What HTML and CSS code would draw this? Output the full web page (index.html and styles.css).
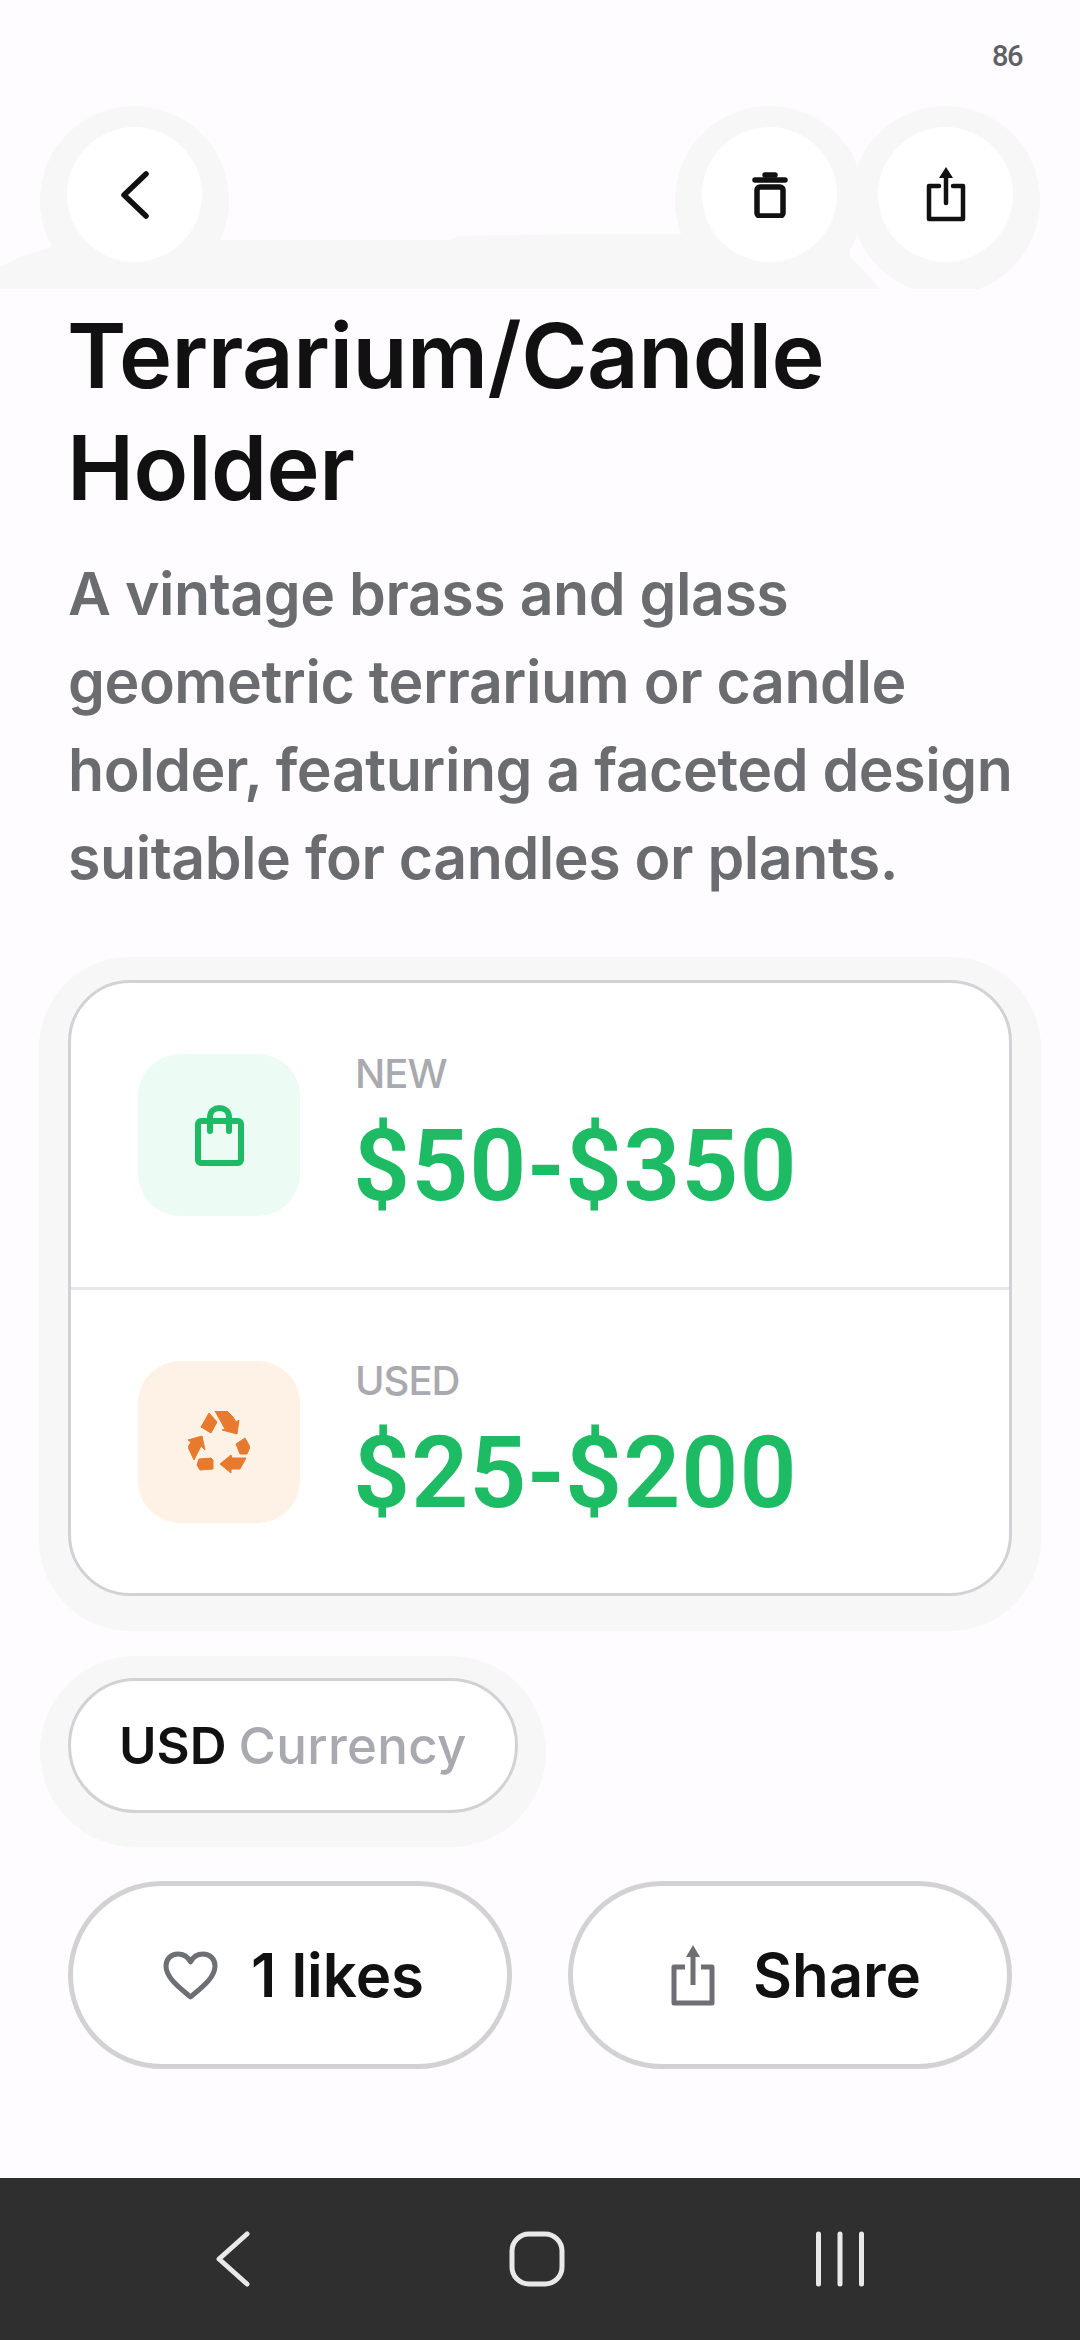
FILE: index.html
```html
<!DOCTYPE html>
<html lang="en">
<head>
    <meta charset="UTF-8">
    <meta name="viewport" content="width=device-width, initial-scale=1.0">
    <title>Terrarium/Candle Holder</title>
    <link rel="stylesheet" href="styles.css">
</head>
<body>

<div class="screen">
    <div class="status-bar">
        <span class="battery">86</span>
    </div>

    <svg class="top-band" viewBox="0 0 881 56" width="881" height="56" aria-hidden="true">
        <path d="M0 34L20 24L48 15L65 7L451 7L458 3L585 1L850 1L850 24L881 56L0 56Z"/>
    </svg>

    <header class="top-bar">
        <button class="round-btn" type="button">
            <svg viewBox="0 0 30 50" width="30" height="50"><path d="M26 4L4 25L26 46" class="line"/></svg>
        </button>
        <div class="top-actions">
            <button class="round-btn" type="button">
                <svg viewBox="0 0 36 46" width="36" height="46">
                    <path d="M3 8H33" class="line"/>
                    <path d="M13 3H23" class="line"/>
                    <rect x="5" y="15" width="26" height="29" rx="3" class="line"/>
                </svg>
            </button>
            <button class="round-btn" type="button">
                <svg viewBox="0 0 40 55" width="40" height="55">
                    <path d="M13 19H3V52H37V19H27" class="line thin"/>
                    <path d="M20 36V8" class="line thin"/>
                    <path d="M13 11L20 0L27 11Z" class="solid"/>
                </svg>
            </button>
        </div>
    </header>

    <main class="content">
        <h1 class="title">Terrarium/Candle Holder</h1>
        <p class="desc">A vintage brass and glass geometric terrarium or candle holder, featuring a faceted design suitable for candles or plants.</p>

        <section class="price-card">
            <div class="price-row">
                <div class="price-icon green-bg">
                    <svg viewBox="0 0 49 61" width="49" height="61" class="bag">
                        <rect x="3" y="16" width="43" height="42" rx="3"/>
                        <path d="M15 26V12C15 0 34 0 34 12V26"/>
                    </svg>
                </div>
                <div class="price-text">
                    <span class="price-label">NEW</span>
                    <span class="price-value">$50-$350</span>
                </div>
            </div>
            <div class="price-row">
                <div class="price-icon orange-bg">
                    <svg viewBox="0 0 62 62" width="62" height="62" class="recycle">
                        <path d="M21 2L29 11L23 22L13 16Z"/>
                        <path d="M27 0H39L45 6L48 11L51 9L49 23L34 19L37 18L32 9Z"/>
                        <path d="M57 27L62 36L59 43L52 43L48 33Z"/>
                        <path d="M58 47L52 58H43V62L32 53L43 44L44 47Z"/>
                        <path d="M11 48L23 47L25 49V58L12 59L9 54Z"/>
                        <path d="M0 29L14 25L17 39L13 35L6 49L0 36L3 31Z"/>
                    </svg>
                </div>
                <div class="price-text">
                    <span class="price-label">USED</span>
                    <span class="price-value">$25-$200</span>
                </div>
            </div>
        </section>

        <div class="currency-wrap">
            <div class="currency"><strong>USD</strong> <span>Currency</span></div>
        </div>

        <div class="actions">
            <button class="action-btn likes-btn" type="button">
                <svg viewBox="0 0 55 49" width="55" height="49">
                    <path d="M27.5 46C20 39 3 28 3 15C3 8 8 3 15 3C20 3 25 6 27.5 11C30 6 35 3 40 3C47 3 52 8 52 15C52 28 35 39 27.5 46Z" class="grey-line"/>
                </svg>
                <span>1 likes</span>
            </button>
            <button class="action-btn share-btn" type="button">
                <svg viewBox="0 0 44 61" width="44" height="61">
                    <path d="M14 22H3V58H41V22H30" class="grey-line"/>
                    <path d="M22 40V8" class="grey-line"/>
                    <path d="M15 12L22 0L29 12Z" class="grey-solid"/>
                </svg>
                <span>Share</span>
            </button>
        </div>
    </main>

    <nav class="nav-bar">
        <svg viewBox="0 0 56 56" width="56" height="56"><path d="M41 3L13 28L41 53" class="nav-line"/></svg>
        <svg viewBox="0 0 56 56" width="56" height="56"><rect x="3" y="3" width="50" height="50" rx="17" class="nav-line"/></svg>
        <svg viewBox="0 0 56 56" width="56" height="56"><path d="M6.5 3V53M28 3V53M49.5 3V53" class="nav-line"/></svg>
    </nav>
</div>

</body>
</html>
```

FILE: styles.css
```css
* {
    box-sizing: border-box;
}
body {
    margin: 0;
    font-family: 'Inter', 'Roboto', sans-serif;
    background-color: #fefcfe;
}
.screen {
    position: relative;
    width: 1080px;
    height: 2340px;
    display: flex;
    flex-direction: column;
    overflow: hidden;
}
.status-bar {
    height: 106px;
    padding: 41px 58px 0 0;
    display: flex;
    justify-content: flex-end;
}
.battery {
    font-family: 'Roboto', sans-serif;
    font-size: 29px;
    font-weight: 500;
    line-height: 30px;
    letter-spacing: -1.5px;
    color: #5f6064;
}
.top-band {
    position: absolute;
    left: 0;
    top: 233px;
    fill: #f7f7f7;
}
.top-bar {
    position: relative;
    height: 183px;
    padding: 21px 67px 0 67px;
    display: flex;
    justify-content: space-between;
    overflow: hidden;
}
.top-actions {
    display: flex;
    gap: 41px;
}
.round-btn {
    width: 135px;
    height: 135px;
    padding: 0;
    border: none;
    border-radius: 50%;
    background-color: white;
    box-shadow: 0 6px 0 27px #f7f7f7;
    display: flex;
    align-items: center;
    justify-content: center;
}
.line {
    fill: none;
    stroke: #111;
    stroke-width: 5.5;
    stroke-linecap: round;
    stroke-linejoin: round;
}
.thin {
    stroke-width: 4.5;
}
.solid {
    fill: #111;
}
.content {
    flex: 1;
    padding: 11px 68px 0 68px;
}
.title {
    margin: 0 0 0 -1px;
    font-size: 90px;
    line-height: 112px;
    font-weight: 600;
    letter-spacing: -0.5px;
    color: #111;
}
.desc {
    margin: 26px -14px 0 0;
    font-size: 59px;
    line-height: 88px;
    font-weight: 580;
    letter-spacing: -0.45px;
    color: #6b6c70;
}
.price-card {
    margin-top: 78px;
    width: 944px;
    background-color: white;
    border: 3px solid #d2d1d5;
    border-radius: 62px;
    box-shadow: 0 6px 0 29px #f7f7f7;
}
.price-row {
    height: 304px;
    padding: 0 67px;
    display: flex;
    align-items: center;
    gap: 55px;
}
.price-row + .price-row {
    height: 306px;
    border-top: 3px solid #e8e8ec;
}
.price-icon {
    width: 162px;
    height: 162px;
    border-radius: 42px;
    display: flex;
    align-items: center;
    justify-content: center;
    flex-shrink: 0;
}
.green-bg {
    background-color: #edfbf5;
}
.orange-bg {
    background-color: #fef2e6;
}
.bag {
    fill: none;
    stroke: #1dbb63;
    stroke-width: 6;
    stroke-linecap: round;
    stroke-linejoin: round;
}
.recycle {
    fill: #e77a2e;
    stroke: #e77a2e;
    stroke-width: 1;
    stroke-linejoin: round;
}
.price-text {
    display: flex;
    flex-direction: column;
    margin-top: 6px;
}
.price-label {
    margin-bottom: 10px;
    font-size: 40px;
    line-height: 46px;
    font-weight: 500;
    letter-spacing: -1px;
    color: #a9aab0;
}
.price-value {
    margin-left: -2px;
    font-family: 'Roboto', sans-serif;
    font-size: 100px;
    line-height: 118px;
    font-weight: 600;
    letter-spacing: 1px;
    color: #1dbb63;
}
.currency-wrap {
    margin-top: 82px;
}
.currency {
    display: inline-flex;
    align-items: center;
    gap: 12px;
    height: 135px;
    padding: 0 48px;
    background-color: white;
    border: 3px solid #d2d1d5;
    border-radius: 68px;
    box-shadow: 0 6px 0 28px #f7f7f7;
    font-size: 51px;
    font-weight: 500;
    color: #a9aab0;
}
.currency strong {
    font-weight: 600;
    color: #111;
}
.currency span {
    letter-spacing: 0.3px;
}
.actions {
    margin-top: 68px;
    display: flex;
    gap: 56px;
}
.action-btn {
    width: 444px;
    height: 188px;
    padding: 0;
    background-color: white;
    border: 5px solid #d2d2d5;
    border-radius: 94px;
    display: flex;
    align-items: center;
    justify-content: center;
    gap: 33px;
    font-family: inherit;
    font-size: 60px;
    font-weight: 600;
    color: #111;
}
.likes-btn {
    padding-left: 7px;
}
.share-btn {
    padding-left: 12px;
    gap: 38px;
}
.grey-line {
    fill: none;
    stroke: #6e6f74;
    stroke-width: 5;
    stroke-linejoin: round;
}
.grey-solid {
    fill: #6e6f74;
}
.nav-bar {
    height: 162px;
    padding-right: 6px;
    display: flex;
    align-items: center;
    justify-content: center;
    gap: 247px;
    background-color: #2f2f2f;
}
.nav-line {
    fill: none;
    stroke: #e9e9e9;
    stroke-width: 5;
    stroke-linecap: round;
    stroke-linejoin: round;
}
```
